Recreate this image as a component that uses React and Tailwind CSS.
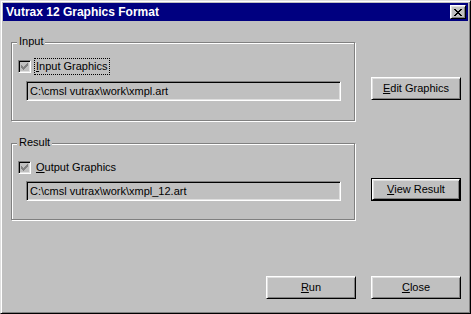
import React from "react";

const raised =
  "border border-t-white border-l-white border-r-black border-b-black shadow-[inset_1px_1px_#dfdfdf,inset_-1px_-1px_#808080]";
const sunken =
  "border border-t-[#808080] border-l-[#808080] border-r-white border-b-white shadow-[inset_1px_1px_#000,inset_-1px_-1px_#dfdfdf]";

const Btn = ({ accel, rest, isDefault }) => {
  const inner = (
    <div
      className={`${raised} bg-[#c0c0c0] flex items-center justify-center text-[11px] text-black ${
        isDefault ? "w-[88px] h-[21px]" : "w-[90px] h-[23px]"
      }`}
    >
      <span>
        <span className="underline underline-offset-[1px]">{accel}</span>
        {rest}
      </span>
    </div>
  );
  if (isDefault) return <div className="border border-black w-[90px] h-[23px]">{inner}</div>;
  return inner;
};

const CheckBox = () => (
  <div className={`${sunken} w-[13px] h-[13px] bg-[#c0c0c0] flex items-center justify-center`}>
    <svg width="7" height="7" viewBox="0 0 7 7" shapeRendering="crispEdges">
      <path d="M0 2h1v3H0zM1 3h1v3H1zM2 4h1v3H2zM3 3h1v3H3zM4 2h1v3H4zM5 1h1v3H5zM6 0h1v3H6z" fill="#808080" />
    </svg>
  </div>
);

const Group = ({ title, label, accel, path, focus, height }) => (
  <div
    className={`relative w-[344px] ${height} border border-[#808080] shadow-[1px_1px_0_#fff,inset_1px_1px_0_#fff] pl-[6px] pt-[17px]`}
  >
    <span className="absolute left-[5px] -top-[8px] bg-[#c0c0c0] px-[2px] text-[11px] leading-[13px]">
      {title}
    </span>
    <div className="flex items-center">
      <CheckBox />
      <div
        className={`ml-[3px] -my-[2px] px-[1px] h-[17px] flex items-center text-[11px] border border-dotted ${
          focus ? "border-black" : "border-transparent"
        }`}
      >
        <span>
          <span className="underline underline-offset-[1px]">{accel}</span>
          {label}
        </span>
      </div>
    </div>
    <div
      className={`${sunken} ml-[8px] ${focus ? "mt-[8px]" : "mt-[7px]"} w-[315px] h-[20px] bg-[#c0c0c0] flex items-center pl-[3px] text-[11px]`}
    >
      {path}
    </div>
  </div>
);

export default function App() {
  return (
    <div
      className="w-[471px] h-[314px] bg-[#c0c0c0] border border-t-[#dfdfdf] border-l-[#dfdfdf] border-r-black border-b-black shadow-[inset_1px_1px_#fff,inset_-1px_-1px_#808080] p-[2px] flex flex-col text-black"
      style={{ fontFamily: '"Liberation Sans", Arial, sans-serif' }}
    >
      {/* Title bar */}
      <div className="h-[18px] bg-[#000080] flex items-center pl-[3px] pr-[2px]">
        <span className="text-white font-bold text-[12px] leading-none">Vutrax 12 Graphics Format</span>
        <div className={`${raised} ml-auto w-[16px] h-[14px] bg-[#c0c0c0] flex items-center justify-center`}>
          <svg width="8" height="7" viewBox="0 0 8 7" shapeRendering="crispEdges">
            <path
              d="M0 0h2v1H0zM6 0h2v1H6zM1 1h2v1H1zM5 1h2v1H5zM2 2h4v1H2zM3 3h2v1H3zM2 4h4v1H2zM1 5h2v1H1zM5 5h2v1H5zM0 6h2v1H0zM6 6h2v1H6z"
              fill="#000"
            />
          </svg>
        </div>
      </div>

      {/* Body */}
      <div className="flex-1 flex flex-col pl-[8px] pr-[7px] pb-[12px]">
        <div className="flex mt-[21px]">
          <Group
            title="Input"
            accel="I"
            label="nput Graphics"
            path="C:\cmsl vutrax\work\xmpl.art"
            focus
            height="h-[79px]"
          />
          <div className="ml-[16px] mt-[35px]">
            <Btn accel="E" rest="dit Graphics" />
          </div>
        </div>

        <div className="flex mt-[22px]">
          <Group
            title="Result"
            accel="O"
            label="utput Graphics"
            path="C:\cmsl vutrax\work\xmpl_12.art"
            height="h-[77px]"
          />
          <div className="ml-[16px] mt-[35px]">
            <Btn accel="V" rest="iew Result" isDefault />
          </div>
        </div>

        <div className="mt-auto flex justify-end gap-[15px]">
          <Btn accel="R" rest="un" />
          <Btn accel="C" rest="lose" />
        </div>
      </div>
    </div>
  );
}
